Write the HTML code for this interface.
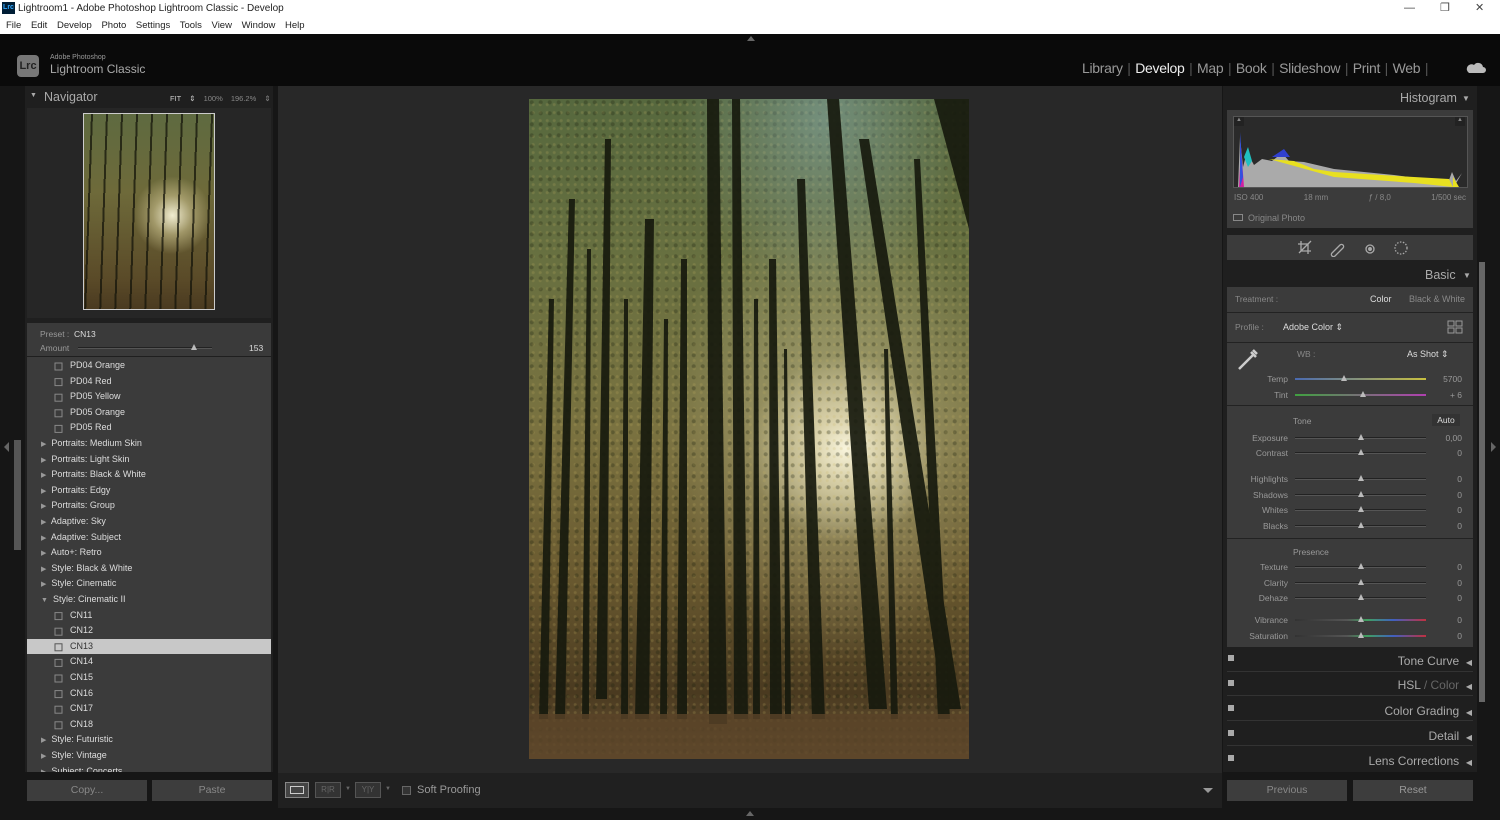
<!DOCTYPE html><html><head><meta charset="utf-8"><style>
*{margin:0;padding:0;box-sizing:border-box}
body{width:1500px;height:820px;overflow:hidden;background:#111;font-family:"Liberation Sans",sans-serif;position:relative;color:#bbb}
.a{position:absolute}
.row{position:absolute;left:0;width:246px;height:15.6px;font-size:9px;color:#ddd;line-height:15.6px}
.sl{position:absolute;height:2px;background:#222;border-bottom:1px solid #555}
.th{position:absolute;width:0;height:0;border-left:3px solid transparent;border-right:3px solid transparent;border-bottom:6px solid #bbb}
.lab{position:absolute;font-size:8.5px;color:#999;text-align:right;width:60px}
.val{position:absolute;font-size:8.5px;color:#999;text-align:right;width:30px}
</style></head><body>
<div class="a" style="left:0;top:0;width:1500px;height:34px;background:#fff"></div>
<div class="a" style="left:2px;top:2px;width:13px;height:12px;background:#001e36;color:#31a8ff;font-size:7px;line-height:12px;text-align:center;font-weight:bold">Lrc</div>
<div class="a" style="left:18px;top:3px;font-size:10px;color:#222">Lightroom1 - Adobe Photoshop Lightroom Classic - Develop</div>
<div class="a" style="left:6px;top:20px;font-size:9.5px;color:#222;word-spacing:7px">File Edit Develop Photo Settings Tools View Window Help</div>
<div class="a" style="left:1404px;top:1px;font-size:11px;color:#444;word-spacing:22px">— ❐ ✕</div>
<div class="a" style="left:0;top:34px;width:1500px;height:52px;background:#0a0a0a"></div>
<div class="a" style="left:747px;top:36px;border-left:4px solid transparent;border-right:4px solid transparent;border-bottom:5px solid #666"></div>
<div class="a" style="left:17px;top:55px;width:22px;height:22px;border-radius:4px;background:#777;color:#222;font-size:11px;font-weight:bold;line-height:22px;text-align:center">Lrc</div>
<div class="a" style="left:50px;top:54px;font-size:7px;color:#999">Adobe Photoshop</div>
<div class="a" style="left:50px;top:62px;font-size:12px;color:#aaa">Lightroom Classic</div>
<div class="a" style="left:1082px;top:60px;font-size:14px;color:#999;white-space:nowrap;letter-spacing:-0.3px;word-spacing:1px">Library <span style="color:#555">|</span> <span style="color:#eee">Develop</span> <span style="color:#555">|</span> Map <span style="color:#555">|</span> Book <span style="color:#555">|</span> Slideshow <span style="color:#555">|</span> Print <span style="color:#555">|</span> Web <span style="color:#555">|</span></div>
<svg class="a" style="left:1466px;top:60px" width="20" height="14"><path d="M3 13h14a3 3 0 0 0 0-6a5 5 0 0 0-9-2a4 4 0 0 0-5 8z" fill="#bbb"/></svg>
<div class="a" style="left:0;top:86px;width:1500px;height:734px;background:#161616"></div>
<div class="a" style="left:278px;top:86px;width:944px;height:687px;background:#282828"></div>
<div class="a" style="left:25px;top:86px;width:248px;height:686px;background:#1f1f1f"></div>
<div class="a" style="left:30px;top:92px;font-size:7px;color:#aaa">▼</div>
<div class="a" style="left:44px;top:90px;font-size:12.5px;color:#aaa">Navigator</div>
<div class="a" style="left:170px;top:94px;font-size:7.5px;color:#888;word-spacing:6px"><span style="color:#ccc">FIT ⇕</span> 100% 196.2% ⇕</div>
<div class="a" style="left:27px;top:108px;width:244px;height:210px;background:#262626"></div>
<div class="a" style="left:83px;top:113px;width:132px;height:197px;border:1px solid #ccc;background:radial-gradient(ellipse 30% 20% at 68% 52%,#f0ecd0 0%,rgba(200,190,140,.6) 50%,transparent 100%),linear-gradient(180deg,#5e6a40 0%,#6e6a3a 40%,#5a4a28 85%,#4a3a20 100%)"></div>
<div class="a" style="left:84px;top:114px;width:130px;height:195px;background:repeating-linear-gradient(92deg,transparent 0 7px,rgba(20,20,10,.75) 7px 9px,transparent 9px 15px)"></div>
<div class="a" style="left:27px;top:323px;width:244px;height:33px;background:#3a3a3a"></div>
<div class="a" style="left:40px;top:329px;font-size:8.5px;color:#999">Preset : &nbsp;<span style="color:#ddd">CN13</span></div>
<div class="a" style="left:40px;top:343px;font-size:8.5px;color:#999">Amount</div>
<div class="sl" style="left:78px;top:347px;width:134px"></div>
<div class="th" style="left:191px;top:344px"></div>
<div class="a" style="left:249px;top:343px;font-size:8.5px;color:#ddd">153</div>
<div class="a" style="left:27px;top:357px;width:244px;height:415px;background:#3b3b3b;overflow:hidden">
<div style="position:relative;top:1px">
<div class="row" style="top:0;left:43px">PD04 Orange</div>
<div class="row" style="top:15.6px;left:43px">PD04 Red</div>
<div class="row" style="top:31.2px;left:43px">PD05 Yellow</div>
<div class="row" style="top:46.8px;left:43px">PD05 Orange</div>
<div class="row" style="top:62.4px;left:43px">PD05 Red</div>
<div class="row" style="top:78px;left:14px"><span style="font-size:7px;color:#999">▶</span>&nbsp; Portraits: Medium Skin</div>
<div class="row" style="top:93.6px;left:14px"><span style="font-size:7px;color:#999">▶</span>&nbsp; Portraits: Light Skin</div>
<div class="row" style="top:109.2px;left:14px"><span style="font-size:7px;color:#999">▶</span>&nbsp; Portraits: Black &amp; White</div>
<div class="row" style="top:124.8px;left:14px"><span style="font-size:7px;color:#999">▶</span>&nbsp; Portraits: Edgy</div>
<div class="row" style="top:140.4px;left:14px"><span style="font-size:7px;color:#999">▶</span>&nbsp; Portraits: Group</div>
<div class="row" style="top:156px;left:14px"><span style="font-size:7px;color:#999">▶</span>&nbsp; Adaptive: Sky</div>
<div class="row" style="top:171.6px;left:14px"><span style="font-size:7px;color:#999">▶</span>&nbsp; Adaptive: Subject</div>
<div class="row" style="top:187.2px;left:14px"><span style="font-size:7px;color:#999">▶</span>&nbsp; Auto+: Retro</div>
<div class="row" style="top:202.8px;left:14px"><span style="font-size:7px;color:#999">▶</span>&nbsp; Style: Black &amp; White</div>
<div class="row" style="top:218.4px;left:14px"><span style="font-size:7px;color:#999">▶</span>&nbsp; Style: Cinematic</div>
<div class="row" style="top:234px;left:14px"><span style="font-size:7px;color:#999">▼</span>&nbsp; Style: Cinematic II</div>
<div class="row" style="top:249.6px;left:43px">CN11</div>
<div class="row" style="top:265.2px;left:43px">CN12</div>
<div class="row" style="top:280.8px;left:0;width:244px;background:#c8c8c8;color:#333;padding-left:43px">CN13</div>
<div class="row" style="top:296.4px;left:43px">CN14</div>
<div class="row" style="top:312px;left:43px">CN15</div>
<div class="row" style="top:327.6px;left:43px">CN16</div>
<div class="row" style="top:343.2px;left:43px">CN17</div>
<div class="row" style="top:358.8px;left:43px">CN18</div>
<div class="row" style="top:374.4px;left:14px"><span style="font-size:7px;color:#999">▶</span>&nbsp; Style: Futuristic</div>
<div class="row" style="top:390px;left:14px"><span style="font-size:7px;color:#999">▶</span>&nbsp; Style: Vintage</div>
<div class="row" style="top:405.6px;left:14px"><span style="font-size:7px;color:#999">▶</span>&nbsp; Subject: Concerts</div>
</div></div>
<svg class="a" style="left:54px;top:362px" width="10" height="370">
<g fill="none" stroke="#888"><rect x="1" y="1" width="7" height="7"/><rect x="1" y="16.6" width="7" height="7"/><rect x="1" y="32.2" width="7" height="7"/><rect x="1" y="47.8" width="7" height="7"/><rect x="1" y="63.4" width="7" height="7"/><rect x="1" y="250.6" width="7" height="7"/><rect x="1" y="266.2" width="7" height="7"/><rect x="1" y="281.8" width="7" height="7" stroke="#555"/><rect x="1" y="297.4" width="7" height="7"/><rect x="1" y="313" width="7" height="7"/><rect x="1" y="328.6" width="7" height="7"/><rect x="1" y="344.2" width="7" height="7"/><rect x="1" y="359.8" width="7" height="7"/></g></svg>
<div class="a" style="left:14px;top:440px;width:7px;height:110px;background:#555"></div>
<div class="a" style="left:4px;top:442px;border-top:5px solid transparent;border-bottom:5px solid transparent;border-right:5px solid #666"></div>
<div class="a" style="left:1491px;top:442px;border-top:5px solid transparent;border-bottom:5px solid transparent;border-left:5px solid #666"></div>
<div class="a" style="left:27px;top:780px;width:120px;height:21px;background:#3d3d3d;color:#888;font-size:10.5px;text-align:center;line-height:21px">Copy...</div>
<div class="a" style="left:152px;top:780px;width:120px;height:21px;background:#3d3d3d;color:#888;font-size:10.5px;text-align:center;line-height:21px">Paste</div>
<div class="a" style="left:278px;top:773px;width:944px;height:35px;background:#202020"></div>
<div class="a" style="left:285px;top:782px;width:24px;height:16px;background:#444;border:1px solid #888"><div style="margin:3px 4px;height:8px;border:1px solid #ccc"></div></div>
<div class="a" style="left:315px;top:782px;width:26px;height:16px;background:#333;border:1px solid #555;color:#666;font-size:8px;line-height:14px;text-align:center">R|R</div>
<div class="a" style="left:345px;top:786px;font-size:6px;color:#666">▼</div>
<div class="a" style="left:355px;top:782px;width:26px;height:16px;background:#333;border:1px solid #555;color:#666;font-size:8px;line-height:14px;text-align:center">Y|Y</div>
<div class="a" style="left:385px;top:786px;font-size:6px;color:#666">▼</div>
<div class="a" style="left:402px;top:786px;width:9px;height:9px;border:1px solid #666;background:#333"></div>
<div class="a" style="left:417px;top:784px;font-size:11px;color:#999">Soft Proofing</div>
<div class="a" style="left:1203px;top:788px;border-left:5px solid transparent;border-right:5px solid transparent;border-top:5px solid #999"></div>
<div class="a" style="left:746px;top:811px;border-left:4px solid transparent;border-right:4px solid transparent;border-bottom:5px solid #666"></div>
<!-- photo -->
<div class="a" style="left:529px;top:99px;width:440px;height:660px;overflow:hidden;background:radial-gradient(ellipse 22% 14% at 72% 53%,#f8f4dc 0%,#d8d0a8 35%,transparent 100%),radial-gradient(ellipse 40% 35% at 70% 50%,rgba(190,185,140,.7) 0%,transparent 100%),linear-gradient(180deg,#56683e 0%,#687040 25%,#7a7240 50%,#6a5a30 72%,#4a3a20 90%,#6a5436 100%)">
<div class="a" style="left:0;top:0;width:440px;height:660px;background:radial-gradient(circle at 30% 30%,rgba(30,35,15,.3) 0 1.5px,transparent 2.5px) 0 0/9px 11px,radial-gradient(circle at 60% 70%,rgba(200,180,100,.2) 0 1px,transparent 2px) 0 0/7px 8px"></div>
<div class="a" style="left:150px;top:0;width:290px;height:200px;background:radial-gradient(ellipse at 50% 10%,rgba(150,190,200,.45),transparent 70%)"></div>
<svg class="a" style="left:0;top:0" width="440" height="660"><g fill="#171a0e" opacity=".92">
<path d="M405 0h35v130z"/>
<path d="M178 0l12 0 8 625 -18 0z"/><path d="M203 0l8 0 8 620 -14 0z"/>
<path d="M116 120l9 0 -5 500 -14 0z"/><path d="M76 40l6 0 -4 560 -11 0z"/>
<path d="M268 80l8 0 20 540 -13 0z"/><path d="M298 0l12 0 48 610 -18 0z"/>
<path d="M330 40l10 0 92 570 -18 0z"/><path d="M240 160l7 0 6 460 -12 0z"/>
<path d="M40 100l6 0 -10 520 -10 0z"/><path d="M152 160l6 0 0 460 -10 0z"/>
<path d="M385 60l6 0 30 560 -12 0z"/><path d="M20 200l5 0 -6 420 -9 0z"/>
<path d="M58 150l4 0 -2 470 -7 0z"/><path d="M95 200l4 0 0 420 -7 0z"/><path d="M135 220l4 0 -1 400 -7 0z"/>
<path d="M225 200l4 0 2 420 -7 0z"/><path d="M355 250l4 0 10 370 -7 0z"/><path d="M255 250l3 0 4 370 -6 0z"/>
</g><rect y="615" width="440" height="45" fill="#5a4428" opacity=".8"/></svg>
</div>
<!-- right panel -->
<div class="a" style="left:1223px;top:86px;width:254px;height:686px;background:#1f1f1f"></div>
<div class="a" style="left:1479px;top:262px;width:6px;height:440px;background:#666"></div>
<div class="a" style="left:1400px;top:91px;font-size:12.5px;color:#aaa">Histogram</div>
<div class="a" style="left:1462px;top:94px;font-size:8px;color:#aaa">▼</div>
<div class="a" style="left:1227px;top:110px;width:246px;height:118px;background:#3b3b3b"></div>
<div class="a" style="left:1233px;top:116px;width:235px;height:72px;background:#2a2a2a;border:1px solid #555"></div>
<svg class="a" style="left:1234px;top:117px" width="233" height="70"><path d="M4 70L6 20 9 50 13 35 20 48 28 42 38 44 48 36 55 44 70 45 100 52 130 55 160 58 190 62 215 63 218 55 222 64 228 56 220 70z" fill="#aaa"/><path d="M35 42 60 44 80 52 100 55 180 60 215 62 219 70 180 66 100 60" fill="#e8e020"/><path d="M38 40 50 32 56 40z" fill="#3040d0"/><path d="M5 70 7 30 10 70z" fill="#d020a0"/><path d="M10 40 14 30 18 44 14 50z" fill="#20c0c0"/><path d="M6 70 6 15 9 60z" fill="#3050e0"/><path d="M219 70 219 60 225 70z" fill="#e8e020"/></svg>
<div class="a" style="left:1234px;top:117px;width:10px;height:9px;background:#222;color:#888;font-size:6px;text-align:center">▲</div>
<div class="a" style="left:1455px;top:117px;width:10px;height:9px;background:#222;color:#888;font-size:6px;text-align:center">▲</div>
<div class="a" style="left:1234px;top:193px;font-size:8px;color:#888;width:232px;display:flex;justify-content:space-between"><span>ISO 400</span><span>18 mm</span><span>ƒ / 8,0</span><span>1/500 sec</span></div>
<div class="a" style="left:1233px;top:214px;width:10px;height:7px;border:1px solid #888"></div>
<div class="a" style="left:1248px;top:213px;font-size:9px;color:#888">Original Photo</div>
<div class="a" style="left:1227px;top:235px;width:246px;height:25px;background:#3b3b3b"></div>
<svg class="a" style="left:1295px;top:239px" width="115" height="18"><g fill="none" stroke="#aaa" stroke-width="1.3"><path d="M3 5h10v10M6 2v10h10M4 14l12-12"/><path d="M37 14l8-8a2 2 0 0 1 3 3l-8 8a2 2 0 0 1-3-3z"/><circle cx="75" cy="10" r="4"/><circle cx="75" cy="10" r="1.3" fill="#aaa"/><circle cx="106" cy="9" r="6" stroke-dasharray="1.5 1.5"/></g></svg>
<div class="a" style="left:1425px;top:268px;font-size:12.5px;color:#aaa">Basic</div>
<div class="a" style="left:1463px;top:271px;font-size:8px;color:#aaa">▼</div>
<div class="a" style="left:1227px;top:287px;width:246px;height:360px;background:#3b3b3b"></div>
<div class="a" style="left:1227px;top:312px;width:246px;height:1px;background:#222"></div>
<div class="a" style="left:1227px;top:342px;width:246px;height:1px;background:#222"></div>
<div class="a" style="left:1227px;top:405px;width:246px;height:1px;background:#222"></div>
<div class="a" style="left:1227px;top:538px;width:246px;height:1px;background:#222"></div>
<div class="a" style="left:1235px;top:294px;font-size:8.5px;color:#888">Treatment :</div>
<div class="a" style="left:1370px;top:294px;font-size:9px;color:#ddd">Color</div>
<div class="a" style="left:1409px;top:294px;font-size:9px;color:#888">Black &amp; White</div>
<div class="a" style="left:1235px;top:322px;font-size:8.5px;color:#888">Profile :</div>
<div class="a" style="left:1283px;top:322px;font-size:9px;color:#ddd">Adobe Color ⇕</div>
<svg class="a" style="left:1447px;top:320px" width="16" height="14"><g fill="none" stroke="#999"><rect x="1" y="1" width="6" height="5"/><rect x="9" y="1" width="6" height="5"/><rect x="1" y="8" width="6" height="5"/><rect x="9" y="8" width="6" height="5"/></g></svg>
<svg class="a" style="left:1236px;top:347px" width="24" height="24"><path d="M3 22L17 8M15 5l5 5M17 3l4 4" stroke="#ccc" stroke-width="2.5"/></svg>
<div class="a" style="left:1297px;top:349px;font-size:8.5px;color:#888">WB :</div>
<div class="a" style="left:1407px;top:349px;font-size:9px;color:#ddd">As Shot ⇕</div>
<div class="lab" style="left:1228px;top:374px">Temp</div><div class="a" style="left:1295px;top:378px;width:131px;height:2px;background:linear-gradient(90deg,#4a6ab0,#c8c040)"></div><div class="th" style="left:1341px;top:375px"></div><div class="val" style="left:1432px;top:374px">5700</div>
<div class="lab" style="left:1228px;top:390px">Tint</div><div class="a" style="left:1295px;top:394px;width:131px;height:2px;background:linear-gradient(90deg,#40a040,#b040b0)"></div><div class="th" style="left:1360px;top:391px"></div><div class="val" style="left:1432px;top:390px">+ 6</div>
<div class="a" style="left:1293px;top:416px;font-size:8.5px;color:#999">Tone</div>
<div class="a" style="left:1432px;top:414px;width:28px;height:12px;background:#333;color:#ddd;font-size:8.5px;text-align:center;line-height:12px">Auto</div>
<div class="a" style="left:1293px;top:547px;font-size:8.5px;color:#999">Presence</div>
<div class="lab" style="left:1228px;top:433px">Exposure</div><div class="val" style="left:1432px;top:433px">0,00</div>
<div class="lab" style="left:1228px;top:448px">Contrast</div><div class="val" style="left:1432px;top:448px">0</div>
<div class="lab" style="left:1228px;top:474px">Highlights</div><div class="val" style="left:1432px;top:474px">0</div>
<div class="lab" style="left:1228px;top:490px">Shadows</div><div class="val" style="left:1432px;top:490px">0</div>
<div class="lab" style="left:1228px;top:505px">Whites</div><div class="val" style="left:1432px;top:505px">0</div>
<div class="lab" style="left:1228px;top:521px">Blacks</div><div class="val" style="left:1432px;top:521px">0</div>
<div class="lab" style="left:1228px;top:562px">Texture</div><div class="val" style="left:1432px;top:562px">0</div>
<div class="lab" style="left:1228px;top:578px">Clarity</div><div class="val" style="left:1432px;top:578px">0</div>
<div class="lab" style="left:1228px;top:593px">Dehaze</div><div class="val" style="left:1432px;top:593px">0</div>
<div class="lab" style="left:1228px;top:615px">Vibrance</div><div class="val" style="left:1432px;top:615px">0</div>
<div class="lab" style="left:1228px;top:631px">Saturation</div><div class="val" style="left:1432px;top:631px">0</div>
<div class="sl" style="left:1295px;top:437px;width:131px"></div><div class="th" style="left:1358px;top:434px"></div>
<div class="sl" style="left:1295px;top:452px;width:131px"></div><div class="th" style="left:1358px;top:449px"></div>
<div class="sl" style="left:1295px;top:478px;width:131px"></div><div class="th" style="left:1358px;top:475px"></div>
<div class="sl" style="left:1295px;top:494px;width:131px"></div><div class="th" style="left:1358px;top:491px"></div>
<div class="sl" style="left:1295px;top:509px;width:131px"></div><div class="th" style="left:1358px;top:506px"></div>
<div class="sl" style="left:1295px;top:525px;width:131px"></div><div class="th" style="left:1358px;top:522px"></div>
<div class="sl" style="left:1295px;top:566px;width:131px"></div><div class="th" style="left:1358px;top:563px"></div>
<div class="sl" style="left:1295px;top:582px;width:131px"></div><div class="th" style="left:1358px;top:579px"></div>
<div class="sl" style="left:1295px;top:597px;width:131px"></div><div class="th" style="left:1358px;top:594px"></div>
<div class="a" style="left:1295px;top:619px;width:131px;height:2px;background:linear-gradient(90deg,#333 0%,#555 40%,#40a060 55%,#4060c0 75%,#c03040 100%)"></div><div class="th" style="left:1358px;top:616px"></div>
<div class="a" style="left:1295px;top:635px;width:131px;height:2px;background:linear-gradient(90deg,#333 0%,#555 40%,#40a060 55%,#4060c0 75%,#c03040 100%)"></div><div class="th" style="left:1358px;top:632px"></div>
<div class="a" style="left:1227px;top:652px;width:246px;height:118px">
<div class="a" style="left:0;top:0;width:246px;height:20px;border-bottom:1px solid #333"></div>
<div class="a" style="left:0;top:24px;width:246px;height:20px;border-bottom:1px solid #333"></div>
<div class="a" style="left:0;top:49px;width:246px;height:20px;border-bottom:1px solid #333"></div>
<div class="a" style="left:0;top:74px;width:246px;height:20px;border-bottom:1px solid #333"></div>
</div>
<div class="a" style="left:1228px;top:655px;width:6px;height:6px;background:#aaa"></div>
<div class="a" style="left:1228px;top:680px;width:6px;height:6px;background:#aaa"></div>
<div class="a" style="left:1228px;top:705px;width:6px;height:6px;background:#aaa"></div>
<div class="a" style="left:1228px;top:730px;width:6px;height:6px;background:#aaa"></div>
<div class="a" style="left:1228px;top:755px;width:6px;height:6px;background:#aaa"></div>
<div class="a" style="left:1300px;top:654px;width:172px;text-align:right;font-size:12px;color:#aaa;line-height:15px">Tone Curve &nbsp;<span style="font-size:8px">◀</span></div>
<div class="a" style="left:1300px;top:678px;width:172px;text-align:right;font-size:12px;color:#aaa;line-height:15px">HSL <span style="color:#666">/ Color</span> &nbsp;<span style="font-size:8px">◀</span></div>
<div class="a" style="left:1300px;top:704px;width:172px;text-align:right;font-size:12px;color:#aaa;line-height:15px">Color Grading &nbsp;<span style="font-size:8px">◀</span></div>
<div class="a" style="left:1300px;top:729px;width:172px;text-align:right;font-size:12px;color:#aaa;line-height:15px">Detail &nbsp;<span style="font-size:8px">◀</span></div>
<div class="a" style="left:1300px;top:754px;width:172px;text-align:right;font-size:12px;color:#aaa;line-height:15px">Lens Corrections &nbsp;<span style="font-size:8px">◀</span></div>
<div class="a" style="left:1227px;top:780px;width:120px;height:21px;background:#3d3d3d;color:#888;font-size:10.5px;text-align:center;line-height:21px">Previous</div>
<div class="a" style="left:1353px;top:780px;width:120px;height:21px;background:#3d3d3d;color:#999;font-size:10.5px;text-align:center;line-height:21px">Reset</div>
</body></html>
